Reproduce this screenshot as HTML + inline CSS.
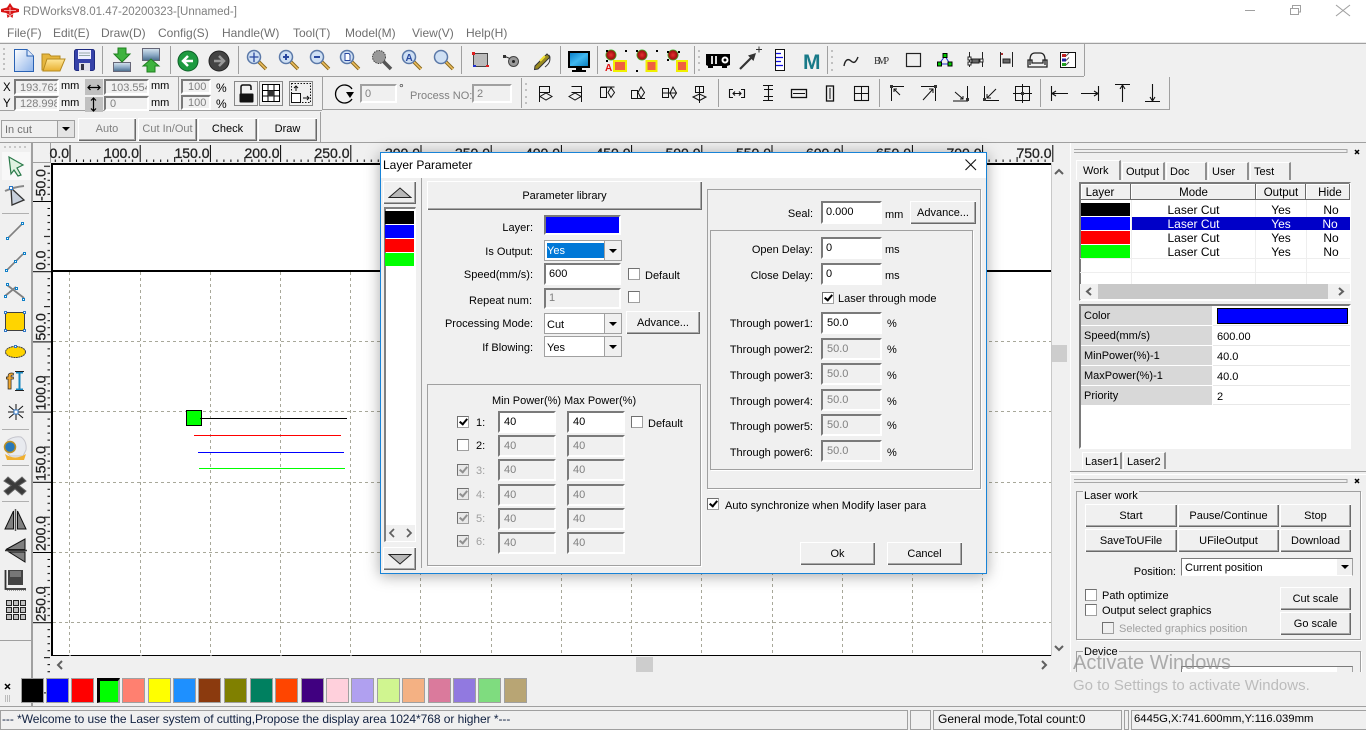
<!DOCTYPE html>
<html><head><meta charset="utf-8"><title>RDWorks</title>
<style>
html,body{margin:0;padding:0;width:1366px;height:727px;overflow:hidden;background:#f0f0f0;font-family:"Liberation Sans",sans-serif;font-size:12px;color:#000}
.t{position:absolute;white-space:nowrap;line-height:14px;font-size:11px;margin-top:1px}
.r{text-align:right}.g{color:#808080}.m{color:#6f6f6f;font-size:12px;margin-top:0}
.n{margin-top:0}
.ctr{text-align:center}
.b{position:absolute;box-sizing:border-box;background:#f0f0f0;box-shadow:inset 1px 1px 0 #fff,inset -1px -1px 0 #696969,inset -2px -2px 0 #a8a8a8;display:flex;align-items:center;justify-content:center;font-size:11px;white-space:nowrap;padding-top:1px}
.e{position:absolute;box-sizing:border-box;background:#fff;border:2px solid #fff;border-top-color:#7a7a7a;border-left-color:#7a7a7a;padding-left:4px;line-height:19px;font-size:11px;white-space:nowrap;overflow:hidden}
.d{background:#f0f0f0;color:#808080}
.c{position:absolute;box-sizing:border-box;width:12px;height:12px;background:#fff;border:1px solid #a0a0a0;border-top-color:#707070;border-left-color:#707070}
.k::after{content:"";position:absolute;left:3px;top:0;width:3px;height:6px;border:solid #000;border-width:0 2px 2px 0;transform:rotate(40deg)}
.kd{background:#e8e8e8}.kd::after{border-color:#909090}
.cb{position:absolute;box-sizing:border-box;background:#fff;border:1px solid #a0a0a0;font-size:11px;line-height:17px;padding-left:3px}
.cb i{position:absolute;right:0;top:0;bottom:0;width:16px;background:#f0f0f0;border-left:1px solid #a0a0a0}
.cb i::after{content:"";position:absolute;left:4px;top:50%;margin-top:-2px;border:4px solid transparent;border-top:4px solid #000;border-bottom:0}
.s{position:absolute;background:#a0a0a0}
.gb{position:absolute;box-sizing:border-box;border:1px solid #a0a0a0;box-shadow:1px 1px 0 #fff}
.sw{position:absolute;top:678px;width:23px;height:25px;box-sizing:border-box;border:1px solid #a0a0a0}
.tab{position:absolute;box-sizing:border-box;background:#f0f0f0;border-top:1px solid #fff;border-left:1px solid #fff;border-right:2px solid #909090;font-size:11px;line-height:19px;padding-left:3px}
.hd{position:absolute;top:184px;height:16px;box-sizing:border-box;background:#f0f0f0;box-shadow:inset -1px -1px 0 #696969,inset 1px 1px 0 #fff;text-align:center;font-size:11.5px;line-height:18px}
.cell{position:absolute;text-align:center;font-size:12px;line-height:15px;height:14px}
.pg{position:absolute;left:1081px;width:131px;height:19px;background:#d8d8d8;font-size:11px;line-height:20px;padding-left:3px;box-sizing:border-box}
.pv{position:absolute;left:1217px;font-size:11px;line-height:14px;margin-top:1px}
</style></head><body>

<!-- title and menu -->
<div style="position:absolute;left:0;top:0;width:1366px;height:42px;background:#fff"></div>
<svg style="position:absolute;left:0;top:0" width="1366" height="44">
<path d="M10 3L13 7.500L19 9L19 12L13.500 13L12.500 18L10 16L7.500 18L6.500 13L1 12L1 9L7 7.500Z" fill="#d81414"/>
<path d="M4 10.500H16M10 7V14M6 13.500L10 15.500L14 13.500" stroke="#fff" stroke-width=".8" fill="none" opacity=".8"/>
<path d="M1245 10.500H1255" stroke="#a0a0a0"/>
<path d="M1290.500 8.500H1298.500V14.500H1290.500ZM1292.500 8V5.500H1300.500V12H1299" stroke="#a0a0a0" fill="none"/>
<path d="M1336 5L1350 16M1350 5L1336 16" stroke="#a0a0a0" stroke-width="1.100"/>
</svg>
<div class="t g n" style="left:23px;top:5px;font-size:11.5px">RDWorksV8.01.47-20200323-[Unnamed-]</div>
<div class="t m" style="left:7px;top:26px">File(F)</div>
<div class="t m" style="left:53px;top:26px">Edit(E)</div>
<div class="t m" style="left:101px;top:26px">Draw(D)</div>
<div class="t m" style="left:158px;top:26px">Config(S)</div>
<div class="t m" style="left:222px;top:26px">Handle(W)</div>
<div class="t m" style="left:293px;top:26px">Tool(T)</div>
<div class="t m" style="left:345px;top:26px">Model(M)</div>
<div class="t m" style="left:412px;top:26px">View(V)</div>
<div class="t m" style="left:466px;top:26px">Help(H)</div>

<!-- main graphics -->
<svg style="position:absolute;left:0;top:0" width="1366" height="727" font-family="Liberation Sans, sans-serif">
<defs>
<linearGradient id="doc" x1="0" y1="0" x2="1" y2="1"><stop offset="0" stop-color="#fff"/><stop offset="1" stop-color="#8fb4ea"/></linearGradient>
<linearGradient id="fol" x1="0" y1="0" x2="0" y2="1"><stop offset="0" stop-color="#ffe79a"/><stop offset="1" stop-color="#e8b030"/></linearGradient>
<radialGradient id="ball"><stop offset="0" stop-color="#e83030"/><stop offset=".75" stop-color="#a01010"/><stop offset="1" stop-color="#30d030"/></radialGradient>
<linearGradient id="mon" x1="0" y1="0" x2="1" y2="1"><stop offset="0" stop-color="#0a7fc8"/><stop offset=".5" stop-color="#40b8f0"/><stop offset="1" stop-color="#0a80c0"/></linearGradient>
<linearGradient id="pic" x1="0" y1="0" x2="0" y2="1"><stop offset="0" stop-color="#d8e6f0"/><stop offset=".55" stop-color="#8aa8c4"/><stop offset="1" stop-color="#486a8a"/></linearGradient>
<g id="mag"><path d="M11 11L19 19" stroke="#8a6a20" stroke-width="3.500"/><path d="M11.500 11.500L19 19" stroke="#f0c060" stroke-width="1.500"/><circle cx="7" cy="7" r="6.500" fill="#cfe0f4" stroke="#5a78a8" stroke-width="1.500"/></g>
<pattern id="ht" x="69.500" y="143" width="70.200" height="20" patternUnits="userSpaceOnUse">
<path d="M7 16.500V19M14 16.500V19M21 16.500V19M28 16.500V19M42 16.500V19M49 16.500V19M56 16.500V19M63 16.500V19M35 14V19" stroke="#000" fill="none"/>
<path d="M.500 2V19" stroke="#000"/></pattern>
<pattern id="vt" x="33" y="201" width="18" height="70.200" patternUnits="userSpaceOnUse">
<path d="M14.500 7.500H17M14.500 14.500H17M14.500 21.500H17M14.500 28.500H17M14.500 42.500H17M14.500 49.500H17M14.500 56.500H17M14.500 63.500H17M11 35.500H17" stroke="#000" fill="none"/>
<path d="M0 .500H18" stroke="#000"/></pattern>
</defs>

<!-- toolbar frame lines -->
<g shape-rendering="crispEdges" fill="#a0a0a0">
<rect x="0" y="42" width="1366" height="2" fill="#e8e8e8"/>
<rect x="0" y="43" width="1366" height="1"/>
<rect x="0" y="76" width="1084" height="1"/>
<rect x="0" y="110" width="322" height="1"/>
<rect x="322" y="109" width="848" height="1"/>
<rect x="1169" y="77" width="1" height="33"/>
<rect x="322" y="77" width="1" height="33"/>
<rect x="1084" y="44" width="1" height="32"/>
<rect x="102" y="46" width="1" height="28"/>
<rect x="170" y="46" width="1" height="28"/>
<rect x="238" y="46" width="1" height="28"/>
<rect x="461" y="46" width="1" height="28"/>
<rect x="560" y="46" width="1" height="28"/>
<rect x="597" y="46" width="1" height="28"/>
<rect x="694" y="46" width="1" height="28"/>
<rect x="827" y="46" width="1" height="28"/>
<rect x="178" y="77" width="1" height="33"/>
<rect x="521" y="78" width="1" height="30"/>
<rect x="718" y="79" width="1" height="28"/>
<rect x="879" y="79" width="1" height="28"/>
<rect x="1040" y="79" width="1" height="28"/>
<rect x="320" y="112" width="1" height="30"/>
<rect x="0" y="142" width="1070" height="1"/>
<rect x="1070" y="142" width="296" height="1"/>
<rect x="31" y="143" width="2" height="564"/>
<rect x="0" y="706" width="1366" height="1"/>
<rect x="1070" y="143" width="1" height="529" fill="#fff"/>
<rect x="1070" y="471" width="296" height="1"/>
<rect x="1070" y="474" width="296" height="1" fill="#fff"/>
</g>
<g fill="#c0c0c0" shape-rendering="crispEdges">
<rect x="3" y="48" width="2" height="2"/><rect x="3" y="53" width="2" height="2"/><rect x="3" y="58" width="2" height="2"/><rect x="3" y="63" width="2" height="2"/><rect x="3" y="68" width="2" height="2"/>
<rect x="698" y="50" width="2" height="2"/><rect x="698" y="56" width="2" height="2"/><rect x="698" y="62" width="2" height="2"/><rect x="698" y="69" width="2" height="2"/>
<rect x="831" y="50" width="2" height="2"/><rect x="831" y="56" width="2" height="2"/><rect x="831" y="62" width="2" height="2"/><rect x="831" y="69" width="2" height="2"/>
<rect x="525" y="83" width="2" height="2"/><rect x="525" y="89" width="2" height="2"/><rect x="525" y="96" width="2" height="2"/><rect x="525" y="102" width="2" height="2"/>
</g>

<!-- row 1 icons -->
<path d="M14.500 49.500H27L33.500 56V71.500H14.500Z" fill="url(#doc)" stroke="#2a62b4"/><path d="M27 49.500V56H33.500" fill="#dfe9fa" stroke="#2a62b4"/>
<path d="M42 70V54H49L51 56H60V70Z" fill="#e6b63e" stroke="#b58a20"/><path d="M43 71L47 59H65L60 71Z" fill="url(#fol)" stroke="#b58a20"/>
<rect x="74.500" y="49.500" width="20" height="21" rx="2" fill="#3642a8" stroke="#1e2a80"/><rect x="78" y="50" width="13" height="9" fill="#eef"/><path d="M79 53H90M79 55.500H90" stroke="#9aa"/><rect x="79" y="63" width="11" height="8" fill="#e0e0e8"/><rect x="81" y="64" width="3" height="6" fill="#334"/>
<rect x="113.500" y="62.500" width="17" height="9" fill="url(#pic)" stroke="#667"/><path d="M118 48H126V54H130L122 62L114 54H118Z" fill="#3eb33e" stroke="#1f7f1f"/>
<rect x="142.500" y="48.500" width="17" height="12" fill="url(#pic)" stroke="#667"/><path d="M147 72V66H143L151 59L159 66H155V72Z" fill="#3eb33e" stroke="#1f7f1f"/>
<circle cx="188" cy="61" r="10" fill="#1d9a40" stroke="#0f5f28"/><path d="M193 61H184M188 56L183 61L188 66" stroke="#fff" stroke-width="2.500" fill="none"/>
<circle cx="219" cy="61" r="10" fill="#444" stroke="#222"/><path d="M214 61H223M219 56L224 61L219 66" stroke="#999" stroke-width="2.500" fill="none"/>
<use href="#mag" x="247" y="50"/><path d="M254 52.500V62M249.500 57H258.500" stroke="#2848a0" stroke-width="1.300"/>
<use href="#mag" x="279" y="50"/><path d="M286 54V60M283 57H289" stroke="#2848a0" stroke-width="2"/>
<use href="#mag" x="310" y="50"/><path d="M314 57H320" stroke="#2848a0" stroke-width="2"/>
<use href="#mag" x="340" y="50"/><path d="M345 53.500H349L350 55V60.500H345Z" fill="#fff" stroke="#2848a0"/>
<g transform="translate(372,50)"><path d="M11 11L19 19" stroke="#555" stroke-width="3.500"/><circle cx="7" cy="7" r="6.500" fill="#999" stroke="#444" stroke-dasharray="1.500 1"/></g>
<use href="#mag" x="402" y="50"/><text x="405.500" y="61" font-size="10" font-weight="bold" fill="#2848a0">A</text>
<use href="#mag" x="434" y="50"/>

<rect x="473.500" y="53.500" width="14" height="13" fill="#bbb" stroke="#444"/><rect x="472" y="52" width="3" height="3" fill="#e02020"/><rect x="486" y="65" width="3" height="2" fill="#e02020"/><rect x="473" y="65" width="3" height="2" fill="#2030d0"/>
<circle cx="513.500" cy="61.500" r="5" fill="#999" stroke="#444"/><circle cx="513.500" cy="61.500" r="1.500" fill="#222"/><path d="M505 56.500L510 58.500" stroke="#333"/><rect x="503" y="55" width="3" height="3" fill="#333"/>
<path d="M535 66L547 54L550 57L538 69L534.500 69.500Z" fill="#9a8a20" stroke="#333"/><path d="M540 61L545 56" stroke="#f0e030" stroke-width="2"/><path d="M545 67Q552 62 549 55" stroke="#333" fill="none"/>
<rect x="568" y="51" width="22" height="17" fill="#000"/><rect x="570" y="53" width="18" height="13" fill="url(#mon)"/><path d="M576 68H582V70H586V72H572V70H576Z" fill="#000"/>

<circle cx="611" cy="55" r="5.500" fill="url(#ball)"/><rect x="614" y="61" width="12" height="10" fill="#f06040" stroke="#f0f000" stroke-width="2"/><rect x="606" y="50" width="2" height="2"/><rect x="625" y="50" width="2" height="2"/><rect x="606" y="60" width="2" height="2"/><text x="605" y="71" font-size="10" font-weight="bold" fill="#e01010">A</text>
<circle cx="642" cy="55" r="5.500" fill="url(#ball)"/><rect x="646.500" y="61" width="10" height="10" fill="#f06040" stroke="#f0f000" stroke-width="2"/><rect x="636" y="50" width="2" height="2"/><rect x="656" y="50" width="2" height="2"/><rect x="636" y="70" width="2" height="2"/>
<circle cx="673" cy="55" r="5.500" fill="url(#ball)"/><rect x="677" y="61" width="10" height="10" fill="#f06040" stroke="#f0f000" stroke-width="2"/><rect x="667" y="51" width="2" height="2"/><rect x="678" y="51" width="2" height="2"/><rect x="667" y="59" width="2" height="2"/>

<path d="M706 54H730V65L727 66V68H722V66H713V68H708V66L706 65Z" fill="#000"/><rect x="711" y="56" width="2" height="8" fill="#ddd"/><rect x="715" y="56" width="2" height="8" fill="#ddd"/><circle cx="725" cy="60" r="3.500" fill="#fff"/><circle cx="725" cy="60" r="1.500" fill="#000"/>
<path d="M740 69L753 56" stroke="#333" stroke-width="2.200"/><path d="M756 53L748 55.500L753.500 61Z" fill="#333"/><path d="M756 49.500H762M759 46.500V52.500" stroke="#333"/>
<rect x="775.500" y="49.500" width="9" height="21" fill="#fff" stroke="#111"/><path d="M776 53.500H781M776 57.500H783M776 61.500H781M776 65.500H783" stroke="#1010e0" stroke-width="1.200"/>
<text x="803" y="69" font-size="21" font-weight="bold" fill="#187a88">M</text>
<path d="M844 66C845 60 848 58 851 61C854 64 856 62 858 57" stroke="#222" fill="none" stroke-width="1.400"/>
<text x="874" y="64" font-family="Liberation Serif,serif" font-size="10" fill="#333" textLength="15">BMP</text>
<rect x="906.500" y="53.500" width="14" height="13" fill="none" stroke="#222" stroke-width="1.200"/>
<path d="M945 56L939 64H950Z" fill="none" stroke="#2030d0"/><g fill="#0c0" stroke="#000"><rect x="943" y="53.500" width="4" height="4"/><rect x="937.500" y="62" width="4" height="4"/><rect x="948" y="62" width="4" height="4"/></g>
<path d="M969.500 52V67M982.500 52V67" stroke="#222"/><rect x="972" y="59" width="7" height="4" fill="#666" stroke="#222"/><rect x="968" y="57" width="3" height="3" fill="#fff" stroke="#222"/><rect x="968" y="62" width="3" height="3" fill="#fff" stroke="#222"/><rect x="980" y="59" width="3" height="3" fill="#fff" stroke="#222"/>
<path d="M1000.500 52V67M1012.500 52V67" stroke="#222"/><rect x="1003" y="59" width="7" height="4" fill="#666" stroke="#222"/><path d="M1001 53H1003V55H1001Z" fill="#a33"/>
<path d="M1030 65V60Q1030 53 1035 53H1040Q1045 53 1045 60V65M1028 60H1032V63H1043V60H1047V67H1028Z" fill="none" stroke="#222" stroke-width="1.300"/>
<rect x="1060.500" y="52.500" width="15" height="15" fill="#fff" stroke="#111"/><rect x="1062" y="54" width="4" height="3" fill="#c02020"/><rect x="1062" y="58.500" width="4" height="3" fill="#2020a0"/><rect x="1062" y="63" width="4" height="3" fill="#20a020"/><path d="M1066 56L1069 53M1066 60.500L1069 57.500M1066 65L1069 62" stroke="#555"/>

<!-- row 2 buttons -->
<rect x="85" y="79" width="18" height="16" fill="#c0c0c0"/><rect x="85" y="97" width="18" height="15" fill="#c0c0c0"/>
<path d="M88 87.500H100M90.500 85L88 87.500L90.500 90M97.500 85L100 87.500L97.500 90" stroke="#000" fill="none" stroke-width="1.200"/>
<path d="M93.500 98V111M91 100.500L93.500 98L96 100.500M91 108.500L93.500 111L96 108.500" stroke="#000" fill="none" stroke-width="1.200"/>
<g fill="#f0f0f0" stroke="#888"><rect x="234.500" y="81.500" width="23" height="24"/><rect x="259.500" y="81.500" width="23" height="24"/><rect x="289.500" y="81.500" width="23" height="24"/></g>
<path d="M241 96V87Q241 85 243 85H249Q251 85 251 87V90" stroke="#111" fill="none" stroke-width="1.500"/><rect x="239.500" y="93.500" width="14" height="9" fill="#111" rx="1"/>
<rect x="262.500" y="84.500" width="17" height="17" fill="#fff" stroke="#000"/><path d="M268 85V101M274 85V101M263 90.500H279M263 96H279" stroke="#000"/><rect x="268" y="90.500" width="6" height="6" fill="#333"/>
<rect x="291.500" y="83.500" width="19" height="19" fill="none" stroke="#111" stroke-dasharray="1.500 1.500"/><rect x="291.500" y="93.500" width="9" height="9" fill="#fff" stroke="#111"/><path d="M296 86V91M294 88L296 86L298 88M303 98H309M307 96L309 98L307 100" stroke="#111" fill="none"/>
<path d="M353 89A9 9 0 1 0 353 99" stroke="#000" fill="none" stroke-width="1.300" transform="translate(-1,0)"/><path d="M346 92H354L350 98Z" fill="#000"/>

<!-- row 2 alignment icons -->
<g fill="none" stroke="#111" shape-rendering="auto">
<path d="M539.500 86V102M539.500 86.500H549.500V92.500H539.500M540 96.500L546 93L552 96.500L546 100Z"/>
<path d="M581.500 86V102M571.500 86.500H581.500V92.500H571.500M569 96.500L575 93L581 96.500L575 100Z"/>
<path d="M600.500 87H614.500M600.500 87.500H606.500V97.500H600.500ZM611 87.500L608 92.500L611 97.500L614.500 92.500Z"/>
<path d="M631 98.500H645M631.500 90.500H637.500V98.500H631.500ZM641 87L638 92.500L641 98L644.500 92.500Z"/>
<path d="M662 93H677M662.500 88.500H668.500V97.500H662.500ZM673 87L670 93L673 98.500L676.500 93Z"/>
<path d="M699.500 86V103M695.500 86.500H703.500V92.500H695.500ZM693 97L699.500 94L706 97L699.500 100.500Z"/>
<path d="M729.500 89V98M729 89.500H733M729 97.500H733M744.500 89V98M745 89.500H741M745 97.500H741M733 93.500H741M735 91.500L733 93.500L735 95.500M739 91.500L741 93.500L739 95.500" stroke-width="1.100"/>
<path d="M763 85.500H773M763 100.500H773M768.500 85.500V89M768.500 97V100.500M764 89.500H773M764 96.500H773M768.500 89.500V96.500" stroke-width="1.100"/>
<rect x="791.500" y="89.500" width="15" height="8" stroke-width="1.300"/><path d="M793 93.500H805"/>
<rect x="826.500" y="86" width="7" height="15" stroke-width="1.300"/><path d="M830 88V99"/>
<rect x="854.500" y="86.500" width="14" height="14" stroke-width="1.100"/><path d="M861.500 86V101M854 93.500H869"/>
<path d="M891.500 86V101M891.500 86.500H904M894 89L900 95M894 92V89H897"/>
<path d="M921 86.500H935.500V101M923 100L933 89M929 89H933V93"/>
<path d="M967.500 86V101H953M955 92L963 99M960 99H963V96"/>
<path d="M984.500 86V100.500H999M987 98L996 89M987 94V98H991"/>
<rect x="1015.500" y="86.500" width="14" height="14"/><path d="M1022.500 84V103M1013 93.500H1032"/>
<path d="M1051.500 86V101M1052 93.500H1068M1052 93.500L1056 91M1052 93.500L1056 96" stroke-width="1.100"/>
<path d="M1098.500 86V101M1081 93.500H1098M1098 93.500L1094 91M1098 93.500L1094 96" stroke-width="1.100"/>
<path d="M1115 84.500H1130M1122.500 85V102M1122.500 85L1120 89M1122.500 85L1125 89" stroke-width="1.100"/>
<path d="M1145 101.500H1160M1152.500 84V101M1152.500 101L1150 97M1152.500 101L1155 97" stroke-width="1.100"/>
</g>
<g fill="#333"><rect x="890" y="85" width="3" height="3"/><rect x="934" y="85" width="3" height="3"/><rect x="966" y="98" width="3" height="3"/><rect x="983" y="98" width="3" height="3"/><rect x="1021" y="92" width="3" height="3"/></g>

<!-- canvas -->
<rect x="52" y="163" width="999" height="493" fill="#fff"/>
<rect x="33" y="143" width="1022" height="20" fill="url(#ht)"/>
<rect x="33" y="163" width="18" height="543" fill="url(#vt)"/>
<rect x="33" y="143" width="18" height="20" fill="#f0f0f0"/>
<path d="M50.500 143V163M33 162.500H51" stroke="#a0a0a0"/>
<g font-size="14" fill="#222" stroke="#222" stroke-width=".3" text-anchor="end">
<text x="69" y="158">0.0</text><text x="139" y="158">100.0</text><text x="209.500" y="158">150.0</text><text x="279.500" y="158">200.0</text><text x="349.500" y="158">250.0</text><text x="420" y="158">300.0</text><text x="490" y="158">350.0</text><text x="560" y="158">400.0</text><text x="630.500" y="158">450.0</text><text x="700.500" y="158">500.0</text><text x="771" y="158">550.0</text><text x="841" y="158">600.0</text><text x="911" y="158">650.0</text><text x="981.500" y="158">700.0</text><text x="1051.500" y="158">750.0</text>
</g>
<g font-size="14" fill="#222" stroke="#222" stroke-width=".3">
<text transform="translate(45.500,201) rotate(-90)">-50.0</text>
<text transform="translate(45.500,270) rotate(-90)">0.0</text>
<text transform="translate(45.500,340.500) rotate(-90)">50.0</text>
<text transform="translate(45.500,410.500) rotate(-90)">100.0</text>
<text transform="translate(45.500,481) rotate(-90)">150.0</text>
<text transform="translate(45.500,551) rotate(-90)">200.0</text>
<text transform="translate(45.500,621.500) rotate(-90)">250.0</text>
</g>
<g stroke="#a8a89a" stroke-dasharray="3 3" shape-rendering="crispEdges">
<path d="M69.500 272V656M140.500 272V656M210.500 272V656M280.500 272V656M350.500 272V656M420.500 272V656M491.500 272V656M561.500 272V656M631.500 272V656M701.500 272V656M772.500 272V656M842.500 272V656M912.500 272V656M982.500 272V656"/>
<path d="M53 341.500H1051M53 411.500H1051M53 482.500H1051M53 552.500H1051M53 622.500H1051"/>
</g>
<g shape-rendering="crispEdges">
<rect x="51" y="163" width="2" height="493" fill="#000"/>
<rect x="51" y="163" width="1000" height="2" fill="#000"/>
<rect x="51" y="270" width="1000" height="2" fill="#000"/>
<rect x="51" y="655" width="1000" height="1" fill="#000"/>
<path d="M69 655h2M140 655h2M210 655h2M280 655h2M350 655h2" stroke="#fff"/>
<rect x="1051" y="163" width="1" height="493" fill="#c8c8c8"/>
<rect x="186.500" y="410.500" width="15" height="15" fill="#0f0" stroke="#000"/>
<rect x="200" y="418" width="147" height="1" fill="#000"/>
<rect x="194" y="435" width="147" height="1" fill="#f00"/>
<rect x="198" y="452" width="146" height="1" fill="#00f"/>
<rect x="199" y="468" width="146" height="1" fill="#0f0"/>
<rect x="52" y="657" width="1000" height="15" fill="#f0f0f0"/>
<rect x="636" y="657" width="17" height="15" fill="#cdcdcd"/>
<rect x="1052" y="345" width="15" height="17" fill="#cdcdcd"/>
</g>
<path d="M62 661L58 665L62 669" stroke="#606060" stroke-width="2" fill="none"/>
<path d="M1042 661L1046 665L1042 669" stroke="#606060" stroke-width="2" fill="none"/>
<path d="M1055 174L1059 170L1063 174" stroke="#606060" stroke-width="2" fill="none"/>
<path d="M1055 646L1059 650L1063 646" stroke="#606060" stroke-width="2" fill="none"/>

<!-- left toolbar -->
<rect x="2" y="152" width="28" height="28" fill="#f8f8f8"/>
<g fill="#c8c8c8"><rect x="4" y="146" width="2" height="2"/><rect x="9" y="146" width="2" height="2"/><rect x="14" y="146" width="2" height="2"/><rect x="19" y="146" width="2" height="2"/><rect x="24" y="146" width="2" height="2"/></g>
<path d="M9 157L23 165L17 168L21 175L18 176L14 170L11 174Z" fill="#dff2e0" stroke="#2a7a4a" stroke-width="1.200"/>
<path d="M11 188L24 200L12 205Z" fill="#c8d0dc" stroke="#333" stroke-width="1.300"/><path d="M5 191Q14 187 24 186" stroke="#888" stroke-width="2" fill="none"/><rect x="9.500" y="186.500" width="3" height="3" fill="#fff" stroke="#2a78c8"/>
<path d="M2 213.500H29M2 429.500H29M2 465.500H29M2 501.500H29" stroke="#b0b0b0"/>
<path d="M8 238L22 224" stroke="#808080" stroke-width="1.600"/><g fill="#fff" stroke="#1080c8"><rect x="6.500" y="237.500" width="2" height="2"/><rect x="21.500" y="222.500" width="2" height="2"/></g>
<path d="M7 270L23 254" stroke="#808080" stroke-width="1.600"/><g fill="#fff" stroke="#1080c8"><rect x="5.500" y="269.500" width="2" height="2"/><rect x="14.500" y="260.500" width="2" height="2"/><rect x="23.500" y="252.500" width="2" height="2"/></g>
<path d="M5 296L16 287M7 285L24 298" stroke="#808080" stroke-width="1.800"/><g fill="#fff" stroke="#1080c8"><rect x="4.500" y="295.500" width="2" height="2"/><rect x="6.500" y="283.500" width="2" height="2"/><rect x="15.500" y="287.500" width="2" height="2"/><rect x="22.500" y="298.500" width="2" height="2"/></g>
<rect x="5.500" y="312.500" width="19" height="18" rx="1.500" fill="#ffd400" stroke="#404040"/><g fill="#fff" stroke="#3078c8"><rect x="4.500" y="311.500" width="2" height="2"/><rect x="23.500" y="311.500" width="2" height="2"/><rect x="4.500" y="329.500" width="2" height="2"/><rect x="23.500" y="329.500" width="2" height="2"/></g>
<ellipse cx="15.500" cy="352" rx="10" ry="5.500" fill="#ffd400" stroke="#404040" stroke-dasharray="2 .5"/><rect x="14.500" y="345.500" width="2" height="2" fill="#fff" stroke="#3078c8"/>
<text x="6" y="389" font-family="Liberation Sans,sans-serif" font-weight="bold" font-size="22" fill="#f0a830" stroke="#222" stroke-width=".7">f</text>
<path d="M16 372.500H23M16 389.500H23M19.500 372V390" stroke="#1888c0" stroke-width="2"/><path d="M15 371.500H24M15 390.500H24" stroke="#222"/>
<path d="M9 406L23 418M23 406L9 418M16 404V420M8 412H24" stroke="#111"/><rect x="14" y="410" width="4" height="4" fill="#fff" stroke="#3078c8"/>
<path d="M8 440Q14 436 21 437Q27 441 26 450L23 456H10L5 450Z" fill="#e8eaef" stroke="#c4c4cc"/><circle cx="10" cy="447" r="5.500" fill="#2878b8" stroke="#c09020" stroke-width="1.500"/><path d="M5 454Q15 461 26 454L24 460H7Z" fill="#f0b030"/>
<path d="M8 477L15 483L22 477L26 481L19 485.500L26 491L22 495L15 489L8 495L4 491L11 485.500L4 481Z" fill="#3a3a3a" stroke="#666"/>
<path d="M13.500 511V529H5ZM17.500 511V529H26Z" fill="#808080" stroke="#111"/><path d="M15.500 509V531" stroke="#555" stroke-width="1.500"/>
<path d="M25 539V549.500H6ZM25 552V562L9 552Z" fill="#808080" stroke="#111"/><path d="M5 550.500H27" stroke="#333" stroke-width="1.500"/>
<rect x="8" y="570" width="15" height="15" fill="#444"/><rect x="10" y="571" width="11" height="6" fill="#777"/><path d="M5.500 570V589H26" stroke="#333" stroke-width="1.800" fill="none"/><path d="M7 590.500H26" stroke="#999" stroke-dasharray="1 1"/>
<g fill="#c0c0c0" stroke="#222"><rect x="6.500" y="600.500" width="5" height="5"/><rect x="13.500" y="600.500" width="5" height="5"/><rect x="20.500" y="600.500" width="5" height="5"/><rect x="6.500" y="607.500" width="5" height="5"/><rect x="13.500" y="607.500" width="5" height="5"/><rect x="20.500" y="607.500" width="5" height="5"/><rect x="6.500" y="614.500" width="5" height="5"/><rect x="13.500" y="614.500" width="5" height="5"/><rect x="20.500" y="614.500" width="5" height="5"/></g>
<path d="M0 640.500H31" stroke="#a0a0a0"/>
<path d="M5 684L10 689M10 684L5 689" stroke="#000" stroke-width="1.500"/>
<path d="M5.500 695V702M7.500 695V702M9.500 695V702" stroke="#bbb"/>

<!-- right dock titles -->
<path d="M1074 149.500H1347M1074 152.500H1347M1347 149V153M1074 479.500H1347M1074 482.500H1347M1347 479V483" stroke="#a8a8a8" fill="none"/>
<path d="M1355 150L1359 154M1359 150L1355 154M1355 479L1359 483M1359 479L1355 483" stroke="#000" stroke-width="1.500"/>
</svg>

<!-- row2/3 controls -->
<div class="t n" style="left:3px;top:81px;font-size:11.5px">X</div>
<div class="t n" style="left:3px;top:97px;font-size:11.5px">Y</div>
<div class="e d" style="left:14px;top:79px;width:45px;height:16px;line-height:14px;padding-left:4px">193.762</div>
<div class="e d" style="left:14px;top:96px;width:45px;height:15px;line-height:13px;padding-left:4px">128.998</div>
<div class="t n" style="left:61px;top:79px">mm</div><div class="t n" style="left:61px;top:96px">mm</div>
<div class="e d" style="left:104px;top:79px;width:45px;height:16px;line-height:14px;padding-left:5px">103.554</div>
<div class="e d" style="left:104px;top:96px;width:45px;height:15px;line-height:13px">0</div>
<div class="t n" style="left:151px;top:79px">mm</div><div class="t n" style="left:151px;top:96px">mm</div>
<div class="e d" style="left:181px;top:79px;width:30px;height:15px;line-height:13px;padding-left:5px">100</div>
<div class="e d" style="left:181px;top:95px;width:30px;height:15px;line-height:13px;padding-left:5px">100</div>
<div class="t n" style="left:216px;top:81px;font-size:12px">%</div><div class="t n" style="left:216px;top:97px;font-size:12px">%</div>
<div class="e d" style="left:360px;top:84px;width:37px;height:19px;line-height:16px;padding-left:3px;border-color:#a0a0a0 #fff #fff #a0a0a0">0</div>
<div class="t n" style="left:399px;top:81px;font-size:12px;color:#333">°</div>
<div class="t g n" style="left:410px;top:89px">Process NO:</div>
<div class="e d" style="left:472px;top:84px;width:40px;height:19px;line-height:16px;padding-left:3px;border-color:#a0a0a0 #fff #fff #a0a0a0">2</div>

<div class="cb" style="left:1px;top:120px;width:74px;height:18px;background:#f0f0f0;color:#707070;line-height:18px;padding-left:3px;border-color:#a0a0a0">In cut<i style="background:#e4e4e4"></i></div>
<div class="b g" style="left:78px;top:118px;width:58px;height:23px;padding:0 0 1px">Auto</div>
<div class="b g" style="left:138px;top:118px;width:59px;height:23px;padding:0 0 1px">Cut In/Out</div>
<div class="b" style="left:198px;top:118px;width:59px;height:23px;padding:0 0 1px">Check</div>
<div class="b" style="left:258px;top:118px;width:59px;height:23px;padding:0 0 1px">Draw</div>

<!-- palette -->
<div class="sw" style="left:21px;background:#000"></div>
<div class="sw" style="left:46px;background:#00f"></div>
<div class="sw" style="left:71px;background:#f00"></div>
<div class="sw" style="left:97px;background:#0f0;border:3px solid #000;border-right:2px solid #a0a0a0;border-bottom:1px solid #a0a0a0"></div>
<div class="sw" style="left:122px;background:#ff8070"></div>
<div class="sw" style="left:148px;background:#ff0"></div>
<div class="sw" style="left:173px;background:#1e90ff"></div>
<div class="sw" style="left:198px;background:#8b3a0e"></div>
<div class="sw" style="left:224px;background:#808000"></div>
<div class="sw" style="left:250px;background:#008060"></div>
<div class="sw" style="left:275px;background:#ff4500"></div>
<div class="sw" style="left:301px;background:#400080"></div>
<div class="sw" style="left:326px;background:#ffd0dc"></div>
<div class="sw" style="left:351px;background:#b0a0f0"></div>
<div class="sw" style="left:377px;background:#d0f590"></div>
<div class="sw" style="left:402px;background:#f4b183"></div>
<div class="sw" style="left:428px;background:#da7a9c"></div>
<div class="sw" style="left:453px;background:#9179e0"></div>
<div class="sw" style="left:478px;background:#7fdc7f"></div>
<div class="sw" style="left:504px;background:#b8a574"></div>

<!-- status bar -->
<div class="gb" style="left:0;top:710px;width:908px;height:20px;border-color:#a0a0a0;box-shadow:none"></div>
<div class="gb" style="left:910px;top:710px;width:21px;height:20px;box-shadow:none"></div>
<div class="gb" style="left:933px;top:710px;width:189px;height:20px;box-shadow:none"></div>
<div class="gb" style="left:1124px;top:710px;width:5px;height:20px;box-shadow:none"></div>
<div class="gb" style="left:1131px;top:710px;width:240px;height:20px;box-shadow:none"></div>
<div class="t n" style="left:2px;top:712px;color:#102040;font-size:12px;letter-spacing:-.06px">--- *Welcome to use the Laser system of cutting,Propose the display area 1024*768 or higher *---</div>
<div class="t n" style="left:938px;top:712px;font-size:12px">General mode,Total count:0</div>
<div class="t n" style="left:1134px;top:712px;font-size:11.3px">6445G,X:741.600mm,Y:116.039mm</div>

<!-- right panel tabs -->
<div class="tab" style="left:1076px;top:160px;width:45px;height:20px;padding-left:6px;line-height:20px">Work</div>
<div class="tab" style="left:1122px;top:162px;width:43px;height:18px">Output</div>
<div class="tab" style="left:1166px;top:162px;width:41px;height:18px">Doc</div>
<div class="tab" style="left:1208px;top:162px;width:41px;height:18px">User</div>
<div class="tab" style="left:1250px;top:162px;width:41px;height:18px">Test</div>

<div style="position:absolute;left:1079px;top:182px;width:272px;height:119px;box-sizing:border-box;background:#fff;border:2px solid #fff;border-top-color:#7a7a7a;border-left-color:#7a7a7a"></div>
<div class="hd" style="left:1081px;width:50px;padding-right:12px">Layer</div>
<div class="hd" style="left:1131px;width:125px">Mode</div>
<div class="hd" style="left:1256px;width:50px">Output</div>
<div class="hd" style="left:1306px;width:44px;padding-left:4px">Hide</div>
<div style="position:absolute;left:1081px;top:203px;width:49px;height:13px;background:#000"></div>
<div style="position:absolute;left:1081px;top:217px;width:49px;height:13px;background:#00f"></div>
<div style="position:absolute;left:1081px;top:231px;width:49px;height:13px;background:#f00"></div>
<div style="position:absolute;left:1081px;top:245px;width:49px;height:13px;background:#0f0"></div>
<div style="position:absolute;left:1132px;top:217px;width:218px;height:13px;background:#0000c8"></div>
<div class="cell" style="left:1132px;top:203px;width:123px">Laser Cut</div>
<div class="cell" style="left:1132px;top:217px;width:123px;color:#fff">Laser Cut</div>
<div class="cell" style="left:1132px;top:231px;width:123px">Laser Cut</div>
<div class="cell" style="left:1132px;top:245px;width:123px">Laser Cut</div>
<div class="cell" style="left:1257px;top:203px;width:48px">Yes</div>
<div class="cell" style="left:1257px;top:217px;width:48px;color:#fff">Yes</div>
<div class="cell" style="left:1257px;top:231px;width:48px">Yes</div>
<div class="cell" style="left:1257px;top:245px;width:48px">Yes</div>
<div class="cell" style="left:1308px;top:203px;width:46px">No</div>
<div class="cell" style="left:1308px;top:217px;width:42px;color:#fff;padding-left:2px;box-sizing:border-box">No</div>
<div class="cell" style="left:1308px;top:231px;width:46px">No</div>
<div class="cell" style="left:1308px;top:245px;width:46px">No</div>
<svg style="position:absolute;left:1080px;top:200px" width="270" height="100">
<path d="M0 58.500H270M0 72.500H270M51.500 0V84M175.500 0V84M226.500 0V84" stroke="#eee" fill="none"/>
<path d="M175.500 17V30M226.500 17V30" stroke="#0000c8"/>
<rect x="0" y="84" width="270" height="15" fill="#f0f0f0"/><rect x="18" y="84" width="230" height="15" fill="#c8c8c8"/>
<path d="M11 88L7 91.500L11 95M259 88L263 91.500L259 95" stroke="#606060" stroke-width="2" fill="none"/>
</svg>

<div style="position:absolute;left:1079px;top:304px;width:272px;height:145px;box-sizing:border-box;background:#fff;border:2px solid #fff;border-top-color:#7a7a7a;border-left-color:#7a7a7a"></div>
<div class="pg" style="top:306px">Color</div>
<div class="pg" style="top:326px">Speed(mm/s)</div>
<div class="pg" style="top:346px">MinPower(%)-1</div>
<div class="pg" style="top:366px">MaxPower(%)-1</div>
<div class="pg" style="top:386px">Priority</div>
<div style="position:absolute;left:1217px;top:308px;width:131px;height:16px;box-sizing:border-box;background:#00f;border:1px solid #000"></div>
<div class="pv" style="top:329px">600.00</div>
<div class="pv" style="top:349px">40.0</div>
<div class="pv" style="top:369px">40.0</div>
<div class="pv" style="top:389px">2</div>
<svg style="position:absolute;left:1213px;top:325px" width="137" height="80"><path d="M0 .500H137M0 20.500H137M0 40.500H137M0 60.500H137M0 79.500H137" stroke="#e8e8e8"/></svg>

<div class="tab" style="left:1082px;top:452px;width:40px;height:17px;padding-left:2px;line-height:18px">Laser1</div>
<div class="tab" style="left:1123px;top:452px;width:43px;height:17px;padding-left:3px;line-height:18px">Laser2</div>

<!-- laser work -->
<div class="gb" style="left:1076px;top:491px;width:285px;height:149px"></div>
<div class="t" style="left:1083px;top:488px;background:#f0f0f0;padding:0 1px">Laser work</div>
<div class="b" style="left:1085px;top:504px;width:92px;height:23px">Start</div>
<div class="b" style="left:1178px;top:504px;width:101px;height:23px">Pause/Continue</div>
<div class="b" style="left:1280px;top:504px;width:71px;height:23px">Stop</div>
<div class="b" style="left:1085px;top:529px;width:92px;height:23px">SaveToUFile</div>
<div class="b" style="left:1178px;top:529px;width:101px;height:23px">UFileOutput</div>
<div class="b" style="left:1280px;top:529px;width:71px;height:23px">Download</div>
<div class="t r" style="left:1100px;top:564px;width:76px">Position:</div>
<div class="cb" style="left:1181px;top:558px;width:172px;height:18px;border-color:#7a7a7a #a0a0a0 #fff #7a7a7a;line-height:18px">Current position<i style="width:15px;border:0"></i></div>
<div class="c" style="left:1085px;top:589px"></div>
<div class="c" style="left:1085px;top:604px"></div>
<div class="t" style="left:1102px;top:588px">Path optimize</div>
<div class="t" style="left:1102px;top:603px">Output select graphics</div>
<div class="c" style="left:1102px;top:622px;background:#f0f0f0"></div>
<div class="t g" style="left:1119px;top:621px;color:#a0a0a0">Selected graphics position</div>
<div class="b" style="left:1280px;top:587px;width:71px;height:23px">Cut scale</div>
<div class="b" style="left:1280px;top:612px;width:71px;height:23px">Go scale</div>

<!-- device and watermark -->
<div class="gb" style="left:1076px;top:651px;width:285px;height:40px"></div>
<div class="t" style="left:1083px;top:644px;background:#f0f0f0;padding:0 1px">Device</div>
<div class="cb" style="left:1181px;top:666px;width:172px;height:18px;border-color:#7a7a7a #a0a0a0 #fff #7a7a7a"><i style="width:15px;border:0"></i></div>
<div style="position:absolute;left:1070px;top:672px;width:296px;height:34px;background:#f0f0f0"></div>
<div class="t n" style="left:1073px;top:652px;font-size:20px;line-height:22px;color:rgba(140,140,140,.7)">Activate Windows</div>
<div class="t" style="left:1073px;top:677px;font-size:15px;line-height:16px;color:#bcbcbc">Go to Settings to activate Windows.</div>

<!-- dialog -->
<div style="position:absolute;left:380px;top:152px;width:607px;height:422px;box-sizing:border-box;background:#f0f0f0;border:1px solid #1883d7;box-shadow:0 2px 14px rgba(0,0,0,.35)"></div>
<div style="position:absolute;left:381px;top:153px;width:605px;height:25px;background:#fff"></div>
<div class="t n" style="left:383px;top:158px;font-size:12px">Layer Parameter</div>
<svg style="position:absolute;left:964px;top:158px" width="14" height="14"><path d="M1.500 1.500L12 12M12 1.500L1.500 12" stroke="#111" stroke-width="1.100"/></svg>

<div class="b" style="left:383px;top:181px;width:33px;height:23px"></div>
<svg style="position:absolute;left:388px;top:187px" width="24" height="12"><path d="M1 10.500L12 1L23 10.500Z" fill="#b8b8b8" stroke="#222"/></svg>
<div style="position:absolute;left:384px;top:207px;width:32px;height:335px;box-sizing:border-box;background:#fff;border:1px solid #fff;border-top:2px solid #808080;border-left:2px solid #808080"></div>
<div style="position:absolute;left:385px;top:211px;width:29px;height:13px;background:#000"></div>
<div style="position:absolute;left:385px;top:225px;width:29px;height:13px;background:#00f"></div>
<div style="position:absolute;left:385px;top:239px;width:29px;height:13px;background:#f00"></div>
<div style="position:absolute;left:385px;top:253px;width:29px;height:13px;background:#0f0"></div>
<div style="position:absolute;left:386px;top:525px;width:29px;height:16px;background:#f0f0f0"></div>
<svg style="position:absolute;left:386px;top:525px" width="29" height="16"><path d="M8 4L4 8L8 12M21 4L25 8L21 12" stroke="#606060" stroke-width="1.700" fill="none"/></svg>
<div class="b" style="left:383px;top:547px;width:33px;height:23px"></div>
<svg style="position:absolute;left:388px;top:553px" width="24" height="13"><path d="M1 1.500L12 11L23 1.500Z" fill="#b8b8b8" stroke="#222"/></svg>
<div class="s" style="left:421px;top:178px;width:1px;height:390px"></div>

<div class="b" style="left:427px;top:181px;width:275px;height:29px">Parameter library</div>
<div class="t r" style="left:430px;top:220px;width:103px">Layer:</div>
<div class="t r" style="left:430px;top:244px;width:103px">Is Output:</div>
<div class="t r" style="left:430px;top:267px;width:103px">Speed(mm/s):</div>
<div class="t r" style="left:430px;top:293px;width:102px">Repeat num:</div>
<div class="t r" style="left:430px;top:316px;width:103px">Processing Mode:</div>
<div class="t r" style="left:430px;top:340px;width:103px">If Blowing:</div>

<div style="position:absolute;left:544px;top:215px;width:77px;height:20px;box-sizing:border-box;background:#00f;border:2px solid #fff;border-top-color:#7a7a7a;border-left-color:#7a7a7a"></div>
<div class="cb" style="left:544px;top:240px;width:78px;height:21px;line-height:18px;padding-left:0"><span style="position:absolute;left:2px;top:2px;width:57px;height:15px;background:#0078d7;color:#fff;line-height:17px;padding-left:0">Yes</span><i></i></div>
<div class="e" style="left:544px;top:263px;width:77px;height:22px;padding-left:3px;line-height:18px">600</div>
<div class="c" style="left:628px;top:268px"></div><div class="t" style="left:645px;top:268px">Default</div>
<div class="e d" style="left:544px;top:288px;width:77px;height:21px;padding-left:3px;line-height:17px">1</div>
<div class="c" style="left:628px;top:291px"></div>
<div class="cb" style="left:544px;top:313px;width:78px;height:21px;line-height:22px;padding-left:2px">Cut<i></i></div>
<div class="b" style="left:626px;top:311px;width:74px;height:23px">Advance...</div>
<div class="cb" style="left:544px;top:336px;width:78px;height:21px;line-height:22px;padding-left:2px">Yes<i></i></div>

<div class="gb" style="left:427px;top:384px;width:274px;height:182px"></div>
<div class="t" style="left:492px;top:393px">Min Power(%)</div>
<div class="t" style="left:564px;top:393px">Max Power(%)</div>
<div class="c k" style="left:457px;top:416px"></div><div class="t" style="left:476px;top:415px">1:</div>
<div class="c" style="left:457px;top:439px"></div><div class="t" style="left:476px;top:438px">2:</div>
<div class="c k kd" style="left:457px;top:464px"></div><div class="t g" style="left:476px;top:463px;color:#a0a0a0">3:</div>
<div class="c k kd" style="left:457px;top:488px"></div><div class="t g" style="left:476px;top:487px;color:#a0a0a0">4:</div>
<div class="c k kd" style="left:457px;top:512px"></div><div class="t g" style="left:476px;top:511px;color:#a0a0a0">5:</div>
<div class="c k kd" style="left:457px;top:535px"></div><div class="t g" style="left:476px;top:534px;color:#a0a0a0">6:</div>
<div class="e" style="left:498px;top:411px;width:58px;height:22px">40</div><div class="e" style="left:567px;top:411px;width:58px;height:22px">40</div>
<div class="e d" style="left:498px;top:435px;width:58px;height:22px">40</div><div class="e d" style="left:567px;top:435px;width:58px;height:22px">40</div>
<div class="e d" style="left:498px;top:459px;width:58px;height:22px">40</div><div class="e d" style="left:567px;top:459px;width:58px;height:22px">40</div>
<div class="e d" style="left:498px;top:484px;width:58px;height:22px">40</div><div class="e d" style="left:567px;top:484px;width:58px;height:22px">40</div>
<div class="e d" style="left:498px;top:508px;width:58px;height:22px">40</div><div class="e d" style="left:567px;top:508px;width:58px;height:22px">40</div>
<div class="e d" style="left:498px;top:532px;width:58px;height:22px">40</div><div class="e d" style="left:567px;top:532px;width:58px;height:22px">40</div>
<div class="c" style="left:631px;top:416px"></div><div class="t" style="left:648px;top:416px">Default</div>

<div class="gb" style="left:707px;top:189px;width:274px;height:300px"></div>
<div class="t r" style="left:730px;top:206px;width:83px">Seal:</div>
<div class="e" style="left:821px;top:201px;width:61px;height:23px;padding-left:3px;line-height:18px">0.000</div>
<div class="t" style="left:885px;top:207px">mm</div>
<div class="b" style="left:910px;top:201px;width:66px;height:23px">Advance...</div>
<div class="gb" style="left:710px;top:230px;width:263px;height:240px"></div>
<div class="t r" style="left:730px;top:242px;width:83px">Open Delay:</div>
<div class="t r" style="left:730px;top:268px;width:83px">Close Delay:</div>
<div class="e" style="left:821px;top:237px;width:61px;height:22px;padding-left:3px">0</div>
<div class="e" style="left:821px;top:263px;width:61px;height:22px;padding-left:3px">0</div>
<div class="t" style="left:885px;top:242px">ms</div><div class="t" style="left:885px;top:268px">ms</div>
<div class="c k" style="left:822px;top:292px"></div><div class="t" style="left:838px;top:291px">Laser through mode</div>
<div class="t r" style="left:713px;top:316px;width:100px">Through power1:</div>
<div class="t r" style="left:713px;top:342px;width:100px">Through power2:</div>
<div class="t r" style="left:713px;top:368px;width:100px">Through power3:</div>
<div class="t r" style="left:713px;top:394px;width:100px">Through power4:</div>
<div class="t r" style="left:713px;top:419px;width:100px">Through power5:</div>
<div class="t r" style="left:713px;top:445px;width:100px">Through power6:</div>
<div class="e" style="left:821px;top:312px;width:61px;height:22px;padding-left:4px">50.0</div>
<div class="e d" style="left:821px;top:338px;width:61px;height:22px;padding-left:4px">50.0</div>
<div class="e d" style="left:821px;top:363px;width:61px;height:22px;padding-left:4px">50.0</div>
<div class="e d" style="left:821px;top:389px;width:61px;height:22px;padding-left:4px">50.0</div>
<div class="e d" style="left:821px;top:414px;width:61px;height:22px;padding-left:4px">50.0</div>
<div class="e d" style="left:821px;top:440px;width:61px;height:22px;padding-left:4px">50.0</div>
<div class="t" style="left:887px;top:316px">%</div><div class="t" style="left:887px;top:342px">%</div><div class="t" style="left:887px;top:368px">%</div><div class="t" style="left:887px;top:394px">%</div><div class="t" style="left:887px;top:418px">%</div><div class="t" style="left:887px;top:445px">%</div>
<div class="c k" style="left:707px;top:498px"></div>
<div class="t" style="left:725px;top:498px">Auto synchronize when Modify laser para</div>
<div class="b" style="left:800px;top:542px;width:75px;height:23px">Ok</div>
<div class="b" style="left:887px;top:542px;width:75px;height:23px">Cancel</div>

</body></html>
